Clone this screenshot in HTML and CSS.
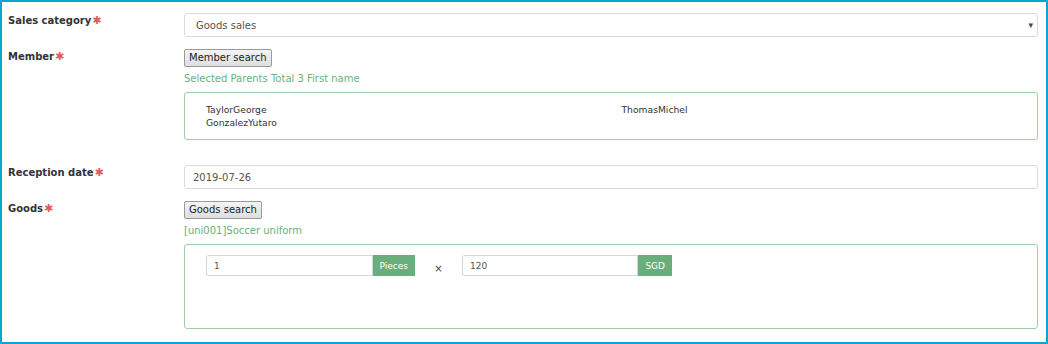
FILE: index.html
```html
<!DOCTYPE html>
<html lang="en">
<head>
    <meta charset="UTF-8">
    <meta name="viewport" content="width=device-width, initial-scale=1.0">
    <title>Sales entry</title>
    <link rel="stylesheet" href="styles.css">
</head>
<body>
    <div class="frame">
        <div class="row">
            <label class="lbl">Sales category<span class="req">✱</span></label>
            <div class="field">
                <div class="select">
                    <span>Goods sales</span>
                    <span class="caret">▾</span>
                </div>
            </div>
        </div>

        <div class="row">
            <label class="lbl">Member<span class="req">✱</span></label>
            <div class="field">
                <button class="btn">Member search</button>
                <p class="note">Selected Parents Total 3 First name</p>
                <div class="box names">
                    <span>TaylorGeorge</span>
                    <span>ThomasMichel</span>
                    <span>GonzalezYutaro</span>
                </div>
            </div>
        </div>

        <div class="row date-row">
            <label class="lbl">Reception date<span class="req">✱</span></label>
            <div class="field">
                <div class="input">2019-07-26</div>
            </div>
        </div>

        <div class="row">
            <label class="lbl">Goods<span class="req">✱</span></label>
            <div class="field">
                <button class="btn">Goods search</button>
                <p class="note">[uni001]Soccer uniform</p>
                <div class="box goods">
                    <div class="group qty">
                        <div class="small-input">1</div>
                        <span class="addon">Pieces</span>
                    </div>
                    <span class="times">×</span>
                    <div class="group price">
                        <div class="small-input">120</div>
                        <span class="addon">SGD</span>
                    </div>
                </div>
            </div>
        </div>
    </div>
</body>
</html>
```

FILE: styles.css
```css
*{
    box-sizing: border-box;
}
body{
    margin: 0;
    font-family: "DejaVu Sans", Verdana, sans-serif;
    font-size: 10px;
    color: #333;
}
.frame{
    width: 1048px;
    height: 344px;
    border: 2px solid #0aa6cf;
    padding: 11px 8px 0 6px;
}
.row{
    display: grid;
    grid-template-columns: 176px 1fr;
    margin-bottom: 12px;
}
.lbl{
    font-weight: bold;
    font-size: 10px;
    line-height: 14px;
    padding-top: 1px;
    color: #333;
}
.req{
    color: #e25b5b;
    font-size: 11px;
    margin-left: 1px;
}
.field{
    display: flex;
    flex-direction: column;
    align-items: flex-start;
}
.select{
    width: 100%;
    height: 24px;
    border: 1px solid #d9dbe0;
    border-radius: 3px;
    display: flex;
    align-items: center;
    justify-content: space-between;
    padding: 0 4px 0 11px;
    color: #555;
}
.caret{
    font-size: 9px;
    color: #444;
}
.btn{
    font-family: inherit;
    font-size: 10px;
    color: #222;
    height: 18px;
    padding: 0 4px;
    border: 1px solid #9a9a9a;
    border-radius: 2px;
    background: linear-gradient(#f4f4f4, #dedede);
    line-height: 16px;
}
.note{
    margin: 6px 0 7px 0;
    color: #6ab07a;
    line-height: 12px;
}
.box{
    width: 100%;
    border: 1px solid #9fd0a8;
    border-radius: 3px;
}
.names{
    display: grid;
    grid-template-columns: 1fr 1fr;
    padding: 10px 0 10px 21px;
    line-height: 13px;
    font-size: 9.2px;
    color: #333;
}
.date-row{
    margin-top: 25px;
}
.input{
    width: 100%;
    height: 24px;
    border: 1px solid #d9dbe0;
    border-radius: 3px;
    display: flex;
    align-items: center;
    padding: 0 8px;
    color: #555;
}
.goods{
    height: 85px;
    display: flex;
    align-items: flex-start;
    padding: 10px 0 0 21px;
}
.group{
    display: flex;
    height: 21px;
}
.small-input{
    flex: 1;
    border: 1px solid #d3d6de;
    border-radius: 3px 0 0 3px;
    display: flex;
    align-items: center;
    padding: 0 7px;
    font-size: 9px;
    color: #555;
}
.addon{
    background: #6aae7b;
    color: #fff;
    font-size: 9px;
    display: flex;
    align-items: center;
    padding: 0 7px;
}
.qty{
    width: 209px;
}
.price{
    width: 210px;
}
.times{
    width: 47px;
    text-align: center;
    padding-top: 8px;
    font-size: 10px;
    color: #444;
}
```
